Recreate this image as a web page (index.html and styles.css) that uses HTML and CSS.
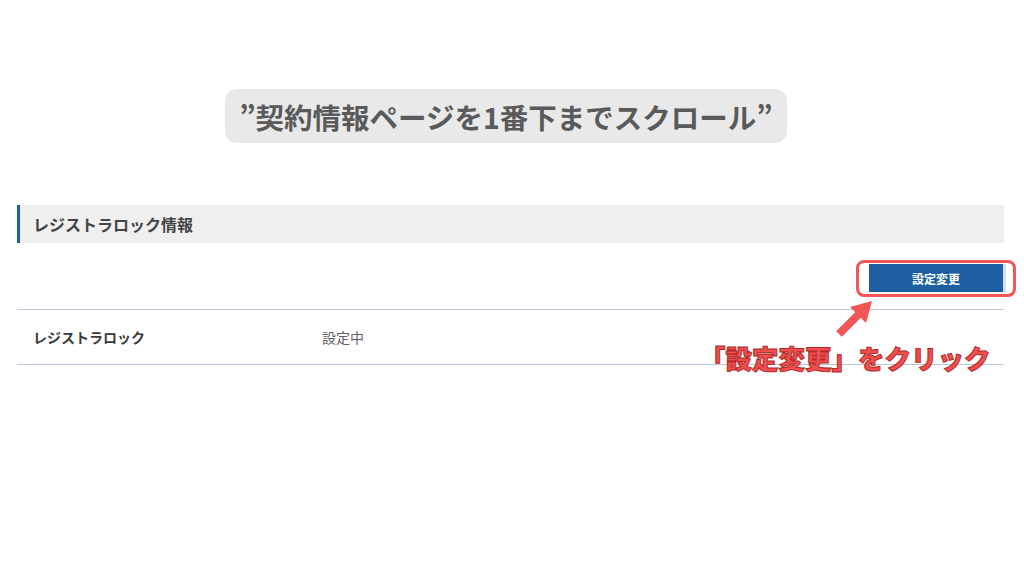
FILE: index.html
```html
<!DOCTYPE html>
<html lang="ja">
<head>
<meta charset="utf-8">
<link rel="stylesheet" href="styles.css">
</head>
<body>
<div class="page">
  <div class="title-wrap">
    <div class="pill">”契約情報ページを1番下までスクロール”</div>
  </div>
  <section class="section">
    <h2 class="section-head">レジストラロック情報</h2>
    <div class="actions">
      <button class="btn">設定変更</button>
    </div>
    <div class="row">
      <div class="row-label">レジストラロック</div>
      <div class="row-value">設定中</div>
    </div>
  </section>
  <div class="highlight"></div>
  <svg class="arrow" width="50" height="50" viewBox="0 0 50 50">
    <line x1="9" y1="42" x2="30" y2="21" stroke="#f25656" stroke-width="8" stroke-linecap="butt"/>
    <polygon points="42,9 20,15 36,31" fill="#f25656"/>
  </svg>
  <div class="caption">「設定変更」をクリック</div>
</div>
</body>
</html>
```
FILE: styles.css
```css
html, body {
  margin: 0;
  padding: 0;
  background: #ffffff;
}
body {
  font-family: "Noto Sans CJK JP", "Noto Sans", sans-serif;
  width: 1024px;
  height: 576px;
  overflow: hidden;
}
.page {
  position: relative;
  width: 1024px;
  height: 576px;
}
.title-wrap {
  padding-top: 89px;
  padding-left: 225px;
  display: flex;
}
.pill {
  background: #e9e9ea;
  border-radius: 12px;
  height: 54px;
  width: 562px;
  box-sizing: border-box;
  display: flex;
  align-items: center;
  justify-content: center;
  font-size: 28.5px;
  font-weight: 700;
  color: #5a5a5a;
  letter-spacing: 0;
  white-space: nowrap;
}
.section {
  margin: 62px 20px 0 17px;
}
.section-head {
  margin: 0;
  height: 38px;
  box-sizing: border-box;
  background: #efefef;
  border-left: 3px solid #1e5fa3;
  padding-left: 13px;
  display: flex;
  align-items: center;
  font-size: 16px;
  font-weight: 700;
  color: #444444;
}
.actions {
  display: flex;
  justify-content: flex-end;
  padding: 21px 0 17px;
  border-bottom: 1px solid #b9c9d9;
}
.btn {
  width: 134px;
  height: 28px;
  border: 0;
  background: #1e5fa3;
  color: #ffffff;
  font-family: "Noto Sans CJK JP", sans-serif;
  font-size: 12px;
  font-weight: 700;
  padding: 0;
  box-shadow: 3px 0 0 #d8dde3;
  margin-right: 1px;
}
.row {
  display: flex;
  align-items: center;
  height: 54px;
  border-bottom: 1px solid #b9c9d9;
  padding-left: 16px;
}
.row-label {
  width: 289px;
  font-size: 14px;
  font-weight: 700;
  color: #3a3a3a;
}
.row-value {
  font-size: 14px;
  color: #5f5f5f;
}
.highlight {
  position: absolute;
  left: 856px;
  top: 260px;
  width: 160px;
  height: 37px;
  box-sizing: border-box;
  border: 3px solid #f25656;
  border-radius: 8px;
}
.arrow {
  position: absolute;
  left: 830px;
  top: 292px;
}
.caption {
  position: absolute;
  left: 699px;
  top: 339px;
  font-size: 26.5px;
  font-weight: 900;
  color: #f24e4e;
  -webkit-text-stroke: 1px #b02a2a;
  white-space: nowrap;
  line-height: 38px;
}
```
